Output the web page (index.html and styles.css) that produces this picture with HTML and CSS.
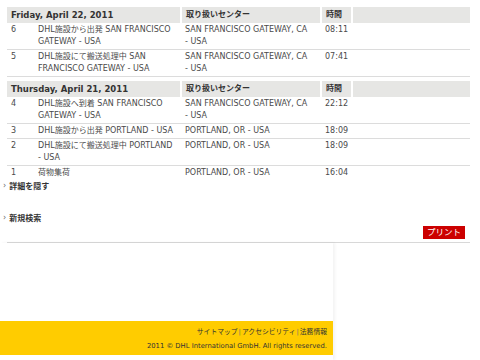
FILE: index.html
```html
<!DOCTYPE html>
<html lang="ja">
<head>
<meta charset="utf-8">
<link rel="stylesheet" href="styles.css">
</head>
<body>
<div class="content">
  <table class="track first">
    <colgroup><col class="c1"><col class="c2"><col class="c3"><col class="c4"><col class="c5"></colgroup>
    <tr class="head"><th colspan="2">Friday, April 22, 2011</th><th class="jp">取り扱いセンター</th><th class="jp">時間</th><th></th></tr>
    <tr><td>6</td><td>DHL施設から出発 SAN FRANCISCO GATEWAY - USA</td><td>SAN FRANCISCO GATEWAY, CA <span class="nw">- USA</span></td><td>08:11</td><td></td></tr>
    <tr><td>5</td><td>DHL施設にて搬送処理中 SAN FRANCISCO GATEWAY - USA</td><td>SAN FRANCISCO GATEWAY, CA <span class="nw">- USA</span></td><td>07:41</td><td></td></tr>
  </table>
  <table class="track second">
    <colgroup><col class="c1"><col class="c2"><col class="c3"><col class="c4"><col class="c5"></colgroup>
    <tr class="head"><th colspan="2">Thursday, April 21, 2011</th><th class="jp">取り扱いセンター</th><th class="jp">時間</th><th></th></tr>
    <tr><td>4</td><td>DHL施設へ到着 SAN FRANCISCO GATEWAY - USA</td><td>SAN FRANCISCO GATEWAY, CA <span class="nw">- USA</span></td><td>22:12</td><td></td></tr>
    <tr><td>3</td><td>DHL施設から出発 PORTLAND - USA</td><td>PORTLAND, OR - USA</td><td>18:09</td><td></td></tr>
    <tr><td>2</td><td>DHL施設にて搬送処理中 PORTLAND <span class="nw">- USA</span></td><td>PORTLAND, OR - USA</td><td>18:09</td><td></td></tr>
    <tr class="last"><td>1</td><td>荷物集荷</td><td>PORTLAND, OR - USA</td><td>16:04</td><td></td></tr>
  </table>
  <a class="more hide" href="#"><span class="arr">›</span>詳細を隠す</a>
  <a class="more search" href="#"><span class="arr">›</span>新規検索</a>
  <div class="print-row"><a class="print" href="#">プリント</a></div>
</div>
<div class="page-bottom">
  <footer class="footer">
    <div class="links"><a href="#">サイトマップ</a><span class="sep">|</span><a href="#">アクセシビリティ</a><span class="sep">|</span><a href="#">法務情報</a></div>
    <div class="copy">2011 © DHL International GmbH. All rights reserved.</div>
  </footer>
</div>
</body>
</html>
```
FILE: styles.css
```css
html, body {
  margin: 0;
  padding: 0;
  background: #fff;
}
body {
  font-family: "DejaVu Sans", "Noto Sans CJK JP", sans-serif;
  font-size: 8px;
  color: #4a4a4a;
}
.nw {
  white-space: nowrap;
}
.content {
  width: 463px;
  margin-left: 7px;
  padding-top: 7px;
}
.track {
  width: 463px;
  border-collapse: collapse;
  table-layout: fixed;
}
.track.second {
  margin-top: 4px;
}
.c1 { width: 27px; }
.c2 { width: 147px; }
.c3 { width: 140px; }
.c4 { width: 31px; }
.c5 { width: 118px; }
.track th {
  background: #e6e6e4;
  border-right: 2px solid #fff;
  text-align: left;
  font-weight: bold;
  font-size: 8.5px;
  color: #333;
  height: 16px;
  padding: 0 4px;
  line-height: 16px;
  box-sizing: border-box;
}
.track th.jp {
  font-size: 8px;
}
.track th:last-child {
  border-right: 0;
}
.track td {
  vertical-align: top;
  padding: 1px 4px;
  line-height: 12px;
  border-bottom: 1px solid #dcdcdc;
}
.track tr.last td {
  border-bottom: 0;
}
.more {
  display: flex;
  align-items: center;
  gap: 3px;
  margin-left: -4px;
  height: 12px;
  font-weight: bold;
  color: #333;
  text-decoration: none;
}
.more .arr {
  color: #666;
  font-weight: normal;
  font-size: 8px;
}
.hide {
  margin-top: -1px;
}
.search {
  margin-top: 20px;
}
.print-row {
  display: flex;
  justify-content: flex-end;
  margin-top: 3px;
  padding-right: 5px;
  padding-bottom: 3px;
  border-bottom: 1px solid #d8d8d8;
}
.print {
  background: #cc0000;
  color: #fff;
  text-decoration: none;
  font-size: 8.5px;
  line-height: 13px;
  padding: 0 4px;
}
.page-bottom {
  width: 333px;
  margin-top: 0;
  padding-top: 78px;
  padding-bottom: 5px;
  box-shadow: 2px 0 3px rgba(0, 0, 0, 0.05);
}
.footer {
  background: #ffcc00;
  height: 34px;
  box-sizing: border-box;
  padding: 4px 6px 0 0;
  text-align: right;
  font-size: 6.8px;
  color: #333;
  line-height: 14px;
}
.footer a {
  color: #333;
  text-decoration: none;
}
.footer .sep {
  color: #777;
  margin: 0 1px;
}
```
